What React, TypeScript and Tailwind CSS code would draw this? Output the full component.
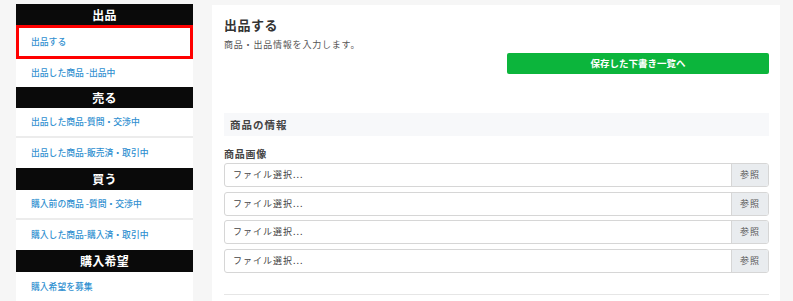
import React from "react";

const font = { fontFamily: '"Noto Sans CJK JP", "Noto Sans", sans-serif' };

function Header({ label, h }: { label: string; h: string }) {
  return (
    <div className={`${h} bg-[#0a0a0a] text-white text-[12px] font-bold flex items-center justify-center tracking-[0.3px]`}>
      {label}
    </div>
  );
}

function Item({ label, cls }: { label: string; cls: string }) {
  return (
    <div className={`${cls} bg-white flex items-center text-[8.8px] text-[#2f8fd0] font-medium`}>
      {label}
    </div>
  );
}

function FileRow() {
  return (
    <div className="h-[24px] flex border border-[#d6d6d6] rounded-[3px] overflow-hidden bg-white">
      <div className="flex-1 flex items-center pl-[8px] text-[9px] tracking-[1px] text-[#444]">ファイル選択...</div>
      <div className="w-[37px] bg-[#e9ecef] border-l border-[#d6d6d6] flex items-center justify-center text-[9px] tracking-[1px] text-[#555]">参照</div>
    </div>
  );
}

export default function App() {
  return (
    <div style={font} className="w-[793px] h-[301px] overflow-hidden bg-[#f6f6f6] flex items-start">
      <div className="ml-[16px] w-[177px] mt-[4px] flex flex-col">
        <Header label="出品" h="h-[21px]" />
        <div className="h-[34px] bg-white border-[3px] border-[#f00] flex items-center pl-[12px] text-[8.8px] text-[#2f8fd0] font-medium">
          出品する
        </div>
        <Item label="出品した商品 -出品中" cls="h-[28px] pl-[15px]" />
        <Header label="売る" h="h-[21px]" />
        <Item label="出品した商品-質問・交渉中" cls="h-[30px] pl-[15px] border-b-2 border-[#ececec]" />
        <Item label="出品した商品-販売済・取引中" cls="h-[30px] pl-[15px]" />
        <Header label="買う" h="h-[22px]" />
        <Item label="購入前の商品 -質問・交渉中" cls="h-[30px] pl-[15px] border-b-2 border-[#ececec]" />
        <Item label="購入した商品-購入済・取引中" cls="h-[30px] pl-[15px]" />
        <Header label="購入希望" h="h-[22px]" />
        <Item label="購入希望を募集" cls="h-[30px] pl-[15px]" />
      </div>
      <div className="ml-[19px] w-[568px] mt-[5px] h-[400px] bg-white pl-[12px] pr-[11px] pt-[10px]">
        <div className="text-[13px] leading-[19px] font-bold text-[#333] tracking-[0.5px]">出品する</div>
        <div className="mt-[5px] text-[9px] leading-[12px] text-[#555] tracking-[0.8px]">商品・出品情報を入力します。</div>
        <div className="mt-[2px] flex justify-end">
          <div className="w-[262px] h-[21px] rounded-[2px] bg-[#0cb53c] text-white text-[9.5px] font-bold flex items-center justify-center">
            保存した下書き一覧へ
          </div>
        </div>
        <div className="mt-[39px] h-[23px] bg-[#f7f8fa] flex items-center pl-[6px] text-[10.5px] font-bold text-[#444] tracking-[1px]">
          商品の情報
        </div>
        <div className="mt-[11px] text-[10px] leading-[14px] font-bold text-[#444] tracking-[0.75px]">商品画像</div>
        <div className="mt-[2px] flex flex-col gap-[4.6px]">
          <FileRow />
          <FileRow />
          <FileRow />
          <FileRow />
        </div>
        <div className="mt-[21px] border-t border-[#e6e6e6]" />
      </div>
    </div>
  );
}
